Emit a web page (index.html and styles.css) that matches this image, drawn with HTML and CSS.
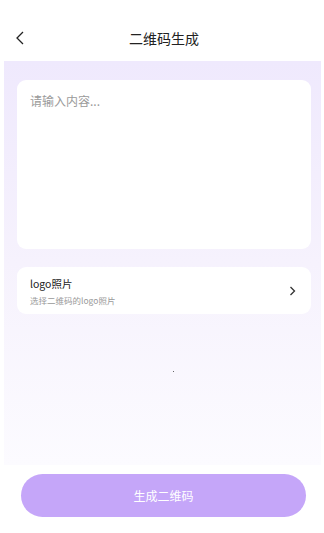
FILE: index.html
```html
<!DOCTYPE html>
<html lang="zh">
<head>
<meta charset="utf-8">
<link rel="stylesheet" href="styles.css">
</head>
<body>
<div class="page">
  <header class="header">
    <svg class="back" width="10" height="14" viewBox="0 0 10 14"><path d="M8 1 L2 7 L8 13" fill="none" stroke="#222" stroke-width="1.3"/></svg>
    <div class="title">二维码生成</div>
  </header>
  <main class="panel">
    <div class="card input-card">
      <div class="placeholder">请输入内容...</div>
    </div>
    <div class="card logo-card">
      <div class="logo-text">
        <div class="logo-title">logo照片</div>
        <div class="logo-sub">选择二维码的logo照片</div>
      </div>
      <svg class="chev" width="7" height="10" viewBox="0 0 7 10"><path d="M1.5 1 L5.5 5 L1.5 9" fill="none" stroke="#333" stroke-width="1.3"/></svg>
    </div>
    <div class="preview"><span class="dot"></span></div>
  </main>
  <div class="footer">
    <button class="gen-btn">生成二维码</button>
  </div>
</div>
</body>
</html>
```

FILE: styles.css
```css
* { box-sizing: border-box; }
html, body { margin: 0; padding: 0; background: #fff; }
body { font-family: "Noto Sans CJK SC", "Noto Sans", sans-serif; width: 324px; height: 533px; overflow: hidden; }
.page { display: flex; flex-direction: column; height: 533px; }
.header { height: 61px; position: relative; display: flex; align-items: center; justify-content: center; }
.back { position: absolute; left: 15px; top: 31px; }
.title { font-size: 14px; color: #222; margin-top: 15px; margin-left: 4px; }
.panel {
  margin: 0 3px 0 4px;
  height: 404px;
  padding: 19px 10px 0 13px;
  background: linear-gradient(180deg, #efe9fd 0%, #f6f2fd 50%, #fcfbff 100%);
  display: flex; flex-direction: column; gap: 18px;
}
.card { background: #fff; border-radius: 9px; }
.input-card { height: 169px; padding: 12px 13px; }
.placeholder { font-size: 12px; color: #9a9a9a; }
.logo-card { height: 47px; padding: 0 15px 0 13px; display: flex; align-items: center; justify-content: space-between; }
.logo-text { display: flex; flex-direction: column; gap: 3px; }
.logo-title { font-size: 10.5px; color: #222; line-height: 15px; }
.logo-sub { font-size: 8.5px; color: #999; line-height: 12px; }
.preview { display: flex; justify-content: center; padding-top: 39px; }
.dot { width: 1px; height: 1px; background: #666; margin-left: 18px; }
.footer { display: flex; justify-content: center; padding-top: 9px; }
.gen-btn {
  width: 285px; height: 43px; border: none; border-radius: 22px;
  background: #c5a6f9; color: #fff; font-size: 12px;
  font-family: "Noto Sans CJK SC", sans-serif; margin-left: 3px;
}
```
